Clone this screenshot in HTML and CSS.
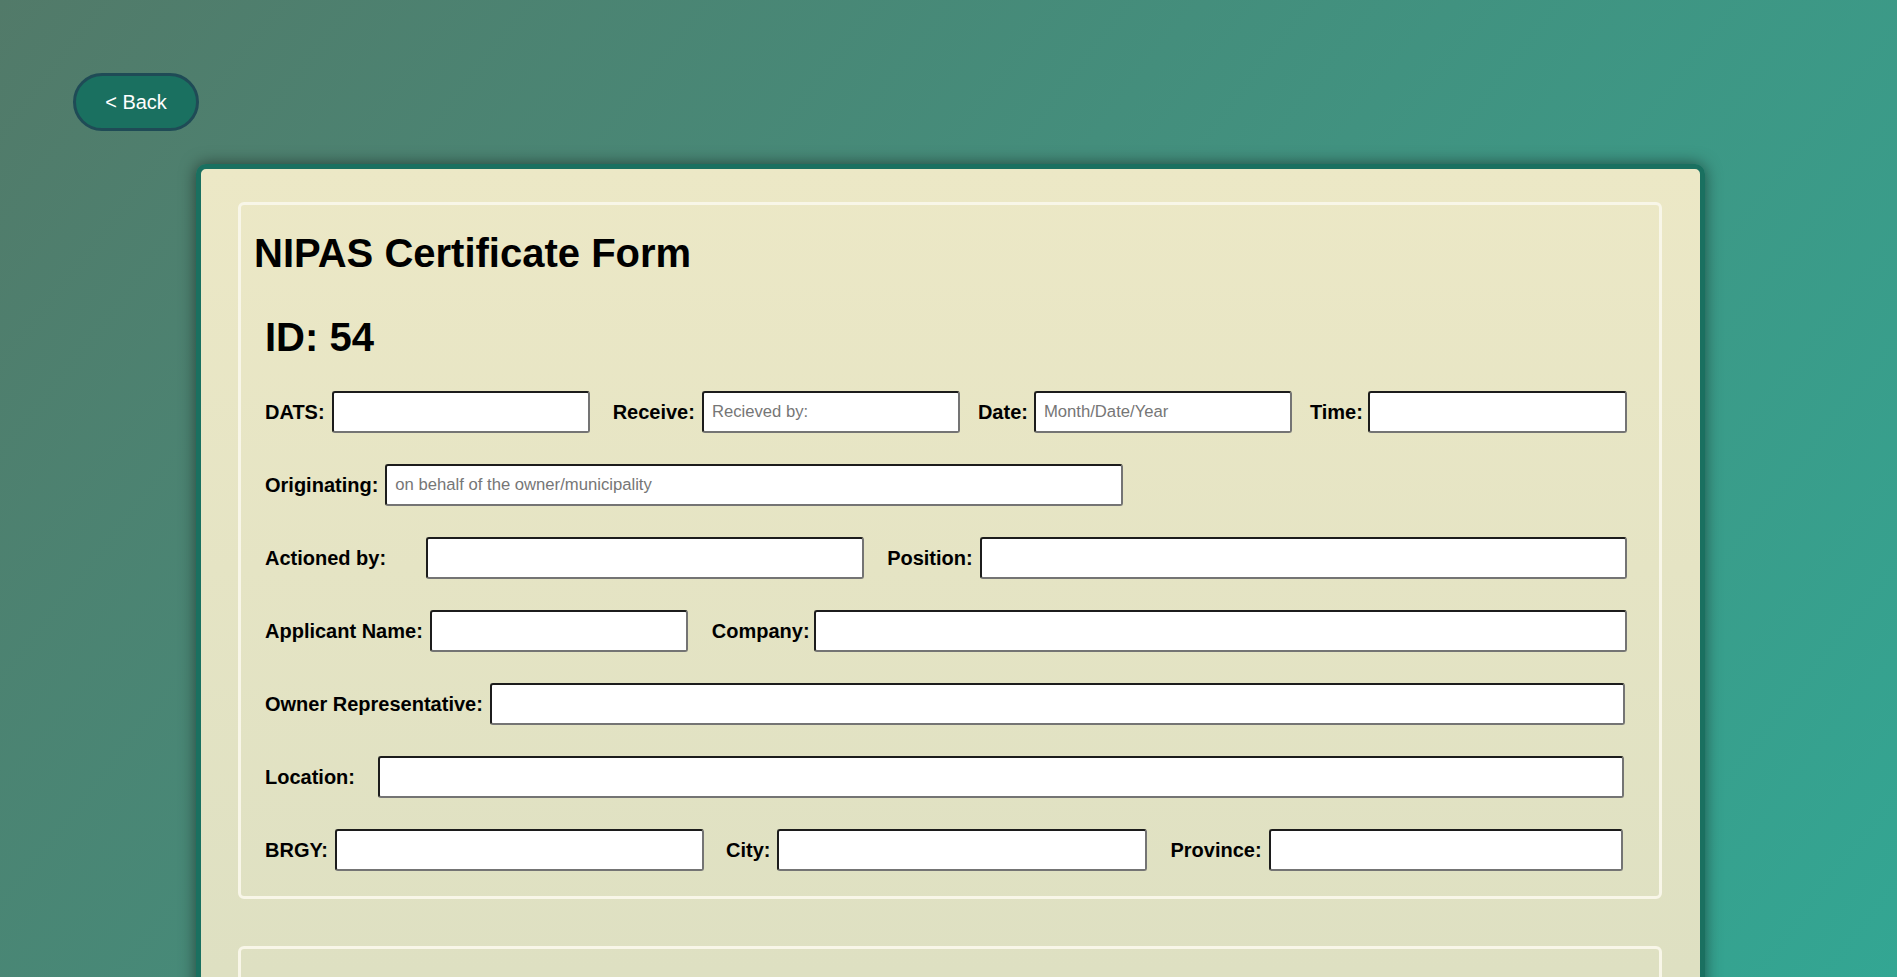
FILE: index.html
```html
<!DOCTYPE html>
<html lang="en">
<head>
<meta charset="utf-8">
<title>NIPAS Certificate Form</title>
<link rel="stylesheet" href="styles.css">
</head>
<body>
  <button class="back-btn" type="button">&lt; Back</button>

  <main class="card">
    <form class="section">
      <h1 class="form-title">NIPAS Certificate Form</h1>
      <h2 class="form-id">ID: 54</h2>

      <div class="rows">
        <div class="row">
          <label class="lbl">DATS:</label>
          <input class="field w258" type="text">
          <label class="lbl g-receive">Receive:</label>
          <input class="field w258" type="text" placeholder="Recieved by:">
          <label class="lbl g-date">Date:</label>
          <input class="field w258" type="text" placeholder="Month/Date/Year">
          <label class="lbl g-time">Time:</label>
          <input class="field w259" type="text">
        </div>

        <div class="row">
          <label class="lbl">Originating:</label>
          <input class="field w738" type="text" placeholder="on behalf of the owner/municipality">
        </div>

        <div class="row">
          <label class="lbl lbl-wide">Actioned by:</label>
          <input class="field w438" type="text">
          <label class="lbl g-position">Position:</label>
          <input class="field w647" type="text">
        </div>

        <div class="row">
          <label class="lbl">Applicant Name:</label>
          <input class="field w258" type="text">
          <label class="lbl g-company">Company:</label>
          <input class="field w813" type="text">
        </div>

        <div class="row">
          <label class="lbl">Owner Representative:</label>
          <input class="field w1135" type="text">
        </div>

        <div class="row">
          <label class="lbl lbl-mid">Location:</label>
          <input class="field w1246" type="text">
        </div>

        <div class="row">
          <label class="lbl">BRGY:</label>
          <input class="field w369" type="text">
          <label class="lbl g-city">City:</label>
          <input class="field w370" type="text">
          <label class="lbl g-province">Province:</label>
          <input class="field w354" type="text">
        </div>
      </div>
    </form>

    <section class="section section-next"></section>
  </main>
</body>
</html>
```

FILE: styles.css
```css
* {
  box-sizing: border-box;
}

html, body {
  margin: 0;
  padding: 0;
}

body {
  min-height: 100vh;
  font-family: "Liberation Sans", Arial, sans-serif;
  color: #000;
  background: linear-gradient(128deg, #527a69 0%, #33a693 100%);
  background-attachment: fixed;
  overflow: hidden;
}

.back-btn {
  display: block;
  margin: 73px 0 0 73px;
  width: 126px;
  height: 58px;
  border: 3px solid #1f4b56;
  border-radius: 29px;
  background: #1a7060;
  color: #fff;
  font-family: "Liberation Sans", Arial, sans-serif;
  font-size: 20px;
  cursor: pointer;
  padding: 0;
}

.card {
  width: 1509px;
  margin: 33px 0 0 196px;
  border: 5px solid #1a7060;
  border-radius: 10px;
  background: linear-gradient(180deg, #ece8c6 0px, #dee0c2 800px);
  box-shadow: 0 0 16px rgba(0, 0, 0, 0.5);
  padding: 33px 38px 40px 37px;
}

.section {
  display: block;
  border: 3px solid #f8f6e8;
  border-radius: 6px;
  padding: 25px 35px 25px 13px;
}

.section-next {
  margin-top: 47px;
  height: 300px;
}

.form-title {
  margin: 0 0 38px;
  font-size: 40px;
  line-height: 46px;
  font-weight: bold;
}

.form-id {
  margin: 0 0 31px 11px;
  font-size: 40px;
  line-height: 46px;
  font-weight: bold;
}

.rows {
  display: flex;
  flex-direction: column;
  gap: 31px;
  padding-left: 11px;
}

.row {
  display: flex;
  align-items: center;
  height: 42px;
}

.lbl {
  font-size: 20px;
  font-weight: bold;
  margin-right: 7px;
  white-space: nowrap;
}

.g-receive {
  margin-left: 23px;
}

.g-date {
  margin-left: 18px;
  margin-right: 6px;
}

.g-time {
  margin-left: 18px;
  margin-right: 5px;
}

.g-position {
  margin-left: 23px;
}

.g-company {
  margin-left: 24px;
  margin-right: 4px;
}

.g-city {
  margin-left: 22px;
}

.g-province {
  margin-left: 23px;
}

.lbl-wide {
  margin-right: 40px;
}

.lbl-mid {
  margin-right: 23px;
}

.field {
  height: 42px;
  flex: none;
  background: #fff;
  border-style: solid;
  border-width: 2px;
  border-color: #1c1c1c #747474 #747474 #1c1c1c;
  border-radius: 3px;
  padding: 0 8px;
  font-family: "Liberation Sans", Arial, sans-serif;
  font-size: 16.67px;
  color: #000;
  outline: none;
}

.field::placeholder {
  color: #767676;
}

.w258 { width: 258px; }
.w259 { width: 259px; }
.w354 { width: 354px; }
.w369 { width: 369px; }
.w370 { width: 370px; }
.w438 { width: 438px; }
.w647 { width: 647px; }
.w738 { width: 738px; }
.w813 { width: 813px; }
.w1135 { width: 1135px; }
.w1246 { width: 1246px; }
```
